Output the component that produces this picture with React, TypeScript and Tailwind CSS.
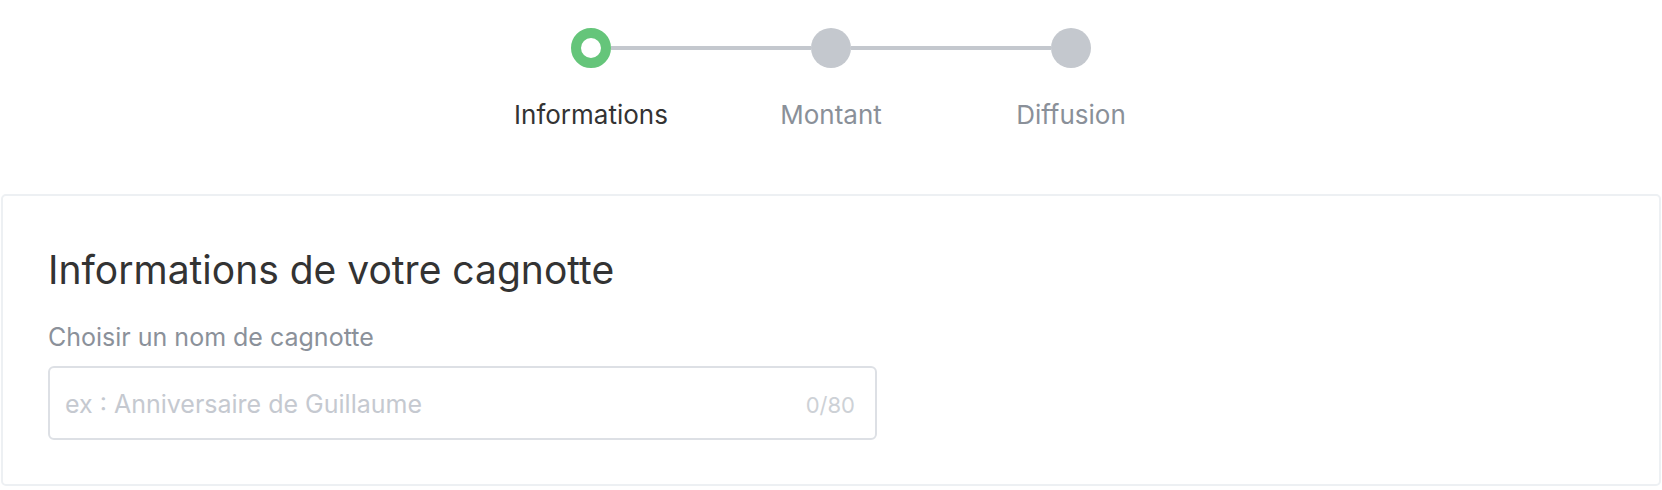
import React, { useState } from 'react';

const steps = [
  { label: 'Informations', active: true },
  { label: 'Montant', active: false },
  { label: 'Diffusion', active: false },
];

const App: React.FC = () => {
  const [name, setName] = useState('');

  return (
    <div className="min-h-[490px] bg-white font-['Inter','Liberation_Sans',sans-serif] antialiased">
      {/* stepper */}
      <div className="pt-[28px]">
        <div className="flex items-center justify-center">
          {steps.map((step, i) => (
            <React.Fragment key={step.label}>
              {i > 0 && <div className="h-[4px] w-[200px] bg-[#c4c8ce]" />}
              {step.active ? (
                <div className="h-[40px] w-[40px] rounded-full border-[10px] border-[#65c57a] bg-white" />
              ) : (
                <div className="h-[40px] w-[40px] rounded-full bg-[#c4c8ce]" />
              )}
            </React.Fragment>
          ))}
        </div>
        <div className="mt-[31px] flex justify-center">
          {steps.map(step => (
            <div
              key={step.label}
              className={`w-[240px] text-center text-[26px] leading-[32px] ${step.active ? 'text-[#333333]' : 'text-[#8a9099]'}`}
            >
              {step.label}
            </div>
          ))}
        </div>
      </div>

      {/* card */}
      <div className="mx-px mt-[63px] rounded-[5px] border-2 border-[#edf0f3] bg-white px-[45px] pt-[50px] pb-[44px]">
        <h2 className="text-[39px] leading-[48px] text-[#333333]">Informations de votre cagnotte</h2>
        <label className="mt-[28px] block text-[25px] leading-[30px] text-[#8b919a]">Choisir un nom de cagnotte</label>
        <div className="mt-[14px] flex h-[74px] w-[829px] items-center rounded-[6px] border-2 border-[#dde0e5] bg-white pl-[15px] pr-[20px] pt-[4px]">
          <input
            value={name}
            maxLength={80}
            onChange={e => setName(e.target.value)}
            placeholder="ex : Anniversaire de Guillaume"
            className="min-w-0 flex-1 bg-transparent text-[25px] text-[#333333] outline-none placeholder:text-[#c5c9d0]"
          />
          <span className="text-[22px] text-[#cdd1d6]">{name.length}/80</span>
        </div>
      </div>
    </div>
  );
};

export default App;
